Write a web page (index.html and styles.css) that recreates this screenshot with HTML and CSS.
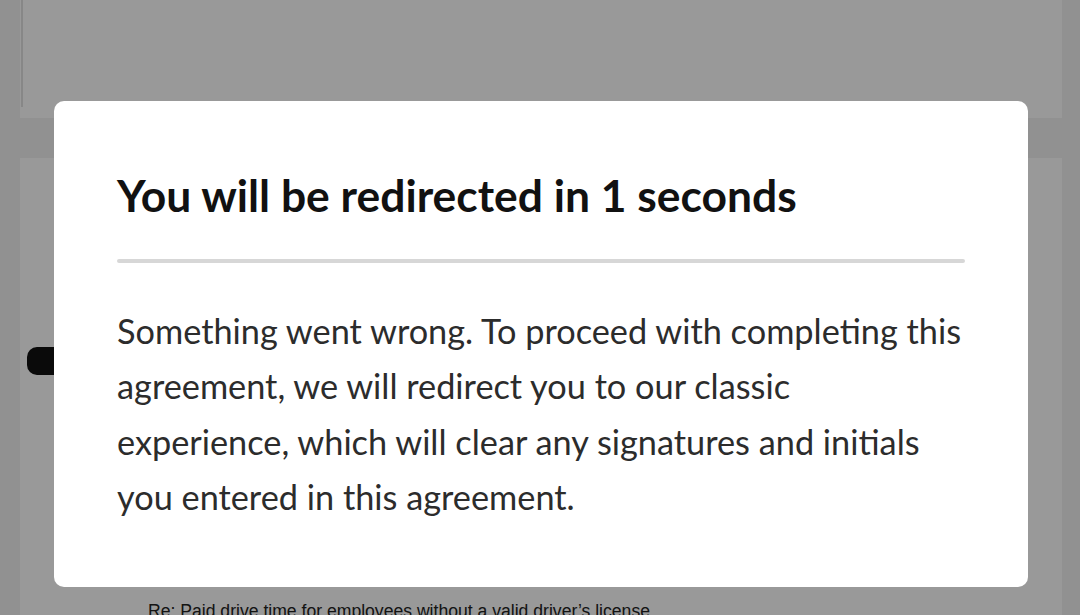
FILE: index.html
```html
<!DOCTYPE html>
<html lang="en">
<head>
<meta charset="utf-8">
<title>Redirect</title>
<link rel="stylesheet" href="styles.css">
</head>
<body>
<div class="page">
  <div class="card card-top">
    <div class="card-top-inner"></div>
  </div>
  <div class="card card-doc">
    <div class="start-tab"></div>
    <p class="doc-line">Re: Paid drive time for employees without a valid driver’s license</p>
  </div>
</div>
<div class="overlay">
  <div class="modal" role="dialog">
    <h1 class="modal-title">You will be redirected in 1 seconds</h1>
    <div class="divider"></div>
    <p class="modal-body">Something went wrong. To proceed with completing this agreement, we will redirect you to our classic experience, which will clear any signatures and initials you entered in this agreement.</p>
  </div>
</div>
</body>
</html>
```

FILE: styles.css
```css
* { box-sizing: border-box; }
html, body { margin: 0; padding: 0; }
body {
  width: 1080px;
  height: 615px;
  overflow: hidden;
  background: #f2f2f2;
  font-family: "Lato", "Liberation Sans", sans-serif;
}
.page {
  display: flex;
  flex-direction: column;
  gap: 40px;
  padding: 0 18px 0 20px;
}
.card {
  background: #ffffff;
}
.card-top {
  height: 118px;
  display: flex;
}
.card-top-inner {
  width: 2px;
  height: 107px;
  margin-left: 1px;
  background: #e2e2e2;
}
.card-doc {
  height: 457px;
  padding: 189px 0 0 7px;
  overflow: hidden;
}
.start-tab {
  width: 60px;
  height: 28px;
  background: #111;
  border-radius: 10px 4px 4px 10px;
}
.doc-line {
  margin: 225px 0 0 121px;
  font-family: "Liberation Sans", sans-serif;
  font-size: 17.6px;
  line-height: 22px;
  color: #222;
  white-space: nowrap;
}
.overlay {
  position: fixed;
  inset: 0;
  background: rgba(0, 0, 0, 0.4);
  display: flex;
  justify-content: center;
  align-items: flex-start;
  padding-top: 101px;
}
.modal {
  width: 974px;
  height: 486px;
  margin-left: 2px;
  background: #fff;
  border-radius: 10px;
  padding: 0 63px;
}
.modal-title {
  margin: 0;
  padding-top: 62px;
  font-size: 44.4px;
  line-height: 64px;
  font-weight: 700;
  color: #111;
}
.divider {
  margin-top: 32px;
  height: 4px;
  border-radius: 2px;
  background: #d7d7d7;
}
.modal-body {
  margin: 40px 0 0;
  font-size: 34.3px;
  line-height: 55.3px;
  color: #2c2c2c;
}
```
